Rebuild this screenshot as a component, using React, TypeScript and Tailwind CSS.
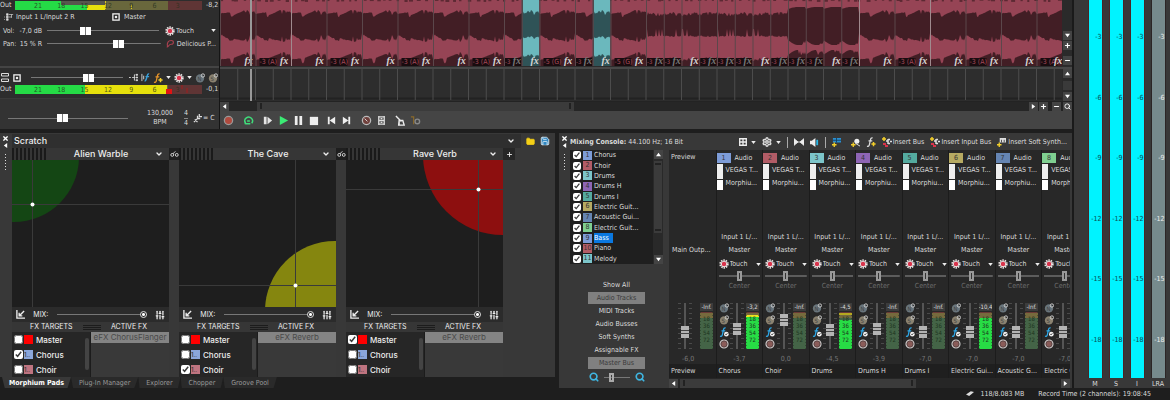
import React from 'react';
import { ChevronDown, Folder, Save, Settings, SlidersVertical, Search, Plus, Minus } from 'lucide-react';

type Track = {
  id: number;
  name: string;
  short: string;
  color: string;
  fader: number;
  gain: string;
  peak: string;
  level: number;
};

const TRACKS: Track[] = [
  { id: 1, name: 'Chorus', short: 'Chorus', color: '#7d9cd8', fader: 42, gain: '-3,7', peak: '-3,2', level: 34 },
  { id: 2, name: 'Choir', short: 'Choir', color: '#b25c66', fader: 68, gain: '0,0', peak: '-Inf.', level: 0 },
  { id: 3, name: 'Drums', short: 'Drums', color: '#7cc5ca', fader: 38, gain: '-4,5', peak: '-4,5', level: 29 },
  { id: 4, name: 'Drums H', short: 'Drums H', color: '#8e65b5', fader: 42, gain: '-3,9', peak: '-Inf.', level: 0 },
  { id: 5, name: 'Drums I', short: 'Drums I', color: '#54aa9f', fader: 31, gain: '-7,0', peak: '-Inf.', level: 0 },
  { id: 6, name: 'Electric Guit...', short: 'Electric Gui...', color: '#b6aa62', fader: 31, gain: '-7,0', peak: '-10,4', level: 31 },
  { id: 7, name: 'Acoustic Gui...', short: 'Acoustic G...', color: '#6585b3', fader: 31, gain: '-7,0', peak: '-Inf.', level: 0 },
  { id: 8, name: 'Electric Guit...', short: 'Electric Guit', color: '#7fcf90', fader: 31, gain: '-7,0', peak: '-Inf.', level: 0 },
  { id: 9, name: 'Bass', short: 'Bass', color: '#7d9cd8', fader: 31, gain: '-7,0', peak: '-Inf.', level: 0 },
  { id: 10, name: 'Piano', short: 'Piano', color: '#b25c66', fader: 31, gain: '-7,0', peak: '-Inf.', level: 0 },
  { id: 11, name: 'Melody', short: 'Melody', color: '#7cc5ca', fader: 31, gain: '-7,0', peak: '-Inf.', level: 0 },
];

const H_SLIDER =
  'h-2 min-w-0 appearance-none bg-[linear-gradient(#777,#777)] bg-[length:100%_1px] bg-center bg-no-repeat [&::-webkit-slider-thumb]:h-2 [&::-webkit-slider-thumb]:w-[11px] [&::-webkit-slider-thumb]:appearance-none [&::-webkit-slider-thumb]:bg-[linear-gradient(90deg,#fff_5px,#777_5px,#777_6px,#fff_6px)]';

const Caret = () => (
  <svg viewBox="0 0 6 4" className="h-[3px] w-[5px] shrink-0">
    <path d="M0 0h6L3 4z" fill="#eee" />
  </svg>
);

/* Automation gear with the red centre */
const Gear = () => (
  <svg viewBox="0 0 12 12" className="size-[10px] shrink-0">
    <circle cx="6" cy="6" r="4.6" fill="none" stroke="#f0e8e8" strokeWidth="2" strokeDasharray="1.8 1.1" />
    <circle cx="6" cy="6" r="3.7" fill="#f0e8e8" />
    <circle cx="6" cy="6" r="2.7" fill="#d8344c" />
  </svg>
);

const Arm = () => (
  <svg viewBox="0 0 12 12" className="size-[10px]">
    <circle cx="6" cy="6" r="4.8" fill="#8b5c59" stroke="#ccc" strokeWidth="1.4" />
    <circle cx="6" cy="6" r="3.6" fill="none" stroke="#4c4040" strokeWidth=".8" />
  </svg>
);

const Disc = ({ letter, color }: { letter: string; color: string }) => (
  <svg viewBox="0 0 12 12" className="size-[10px] shrink-0">
    <circle cx="6" cy="6.5" r="5" fill={color} />
    <text x="3" y="9" fontSize="7" fill="#444">{letter}</text>
    <circle cx="9.5" cy="3" r="2" fill="none" stroke="#c8c8c8" strokeWidth="1.2" />
  </svg>
);

const Fx = ({ color, plus }: { color: string; plus?: boolean }) => (
  <svg viewBox="0 0 12 12" className="size-[10px] shrink-0">
    <path d="M8 1.2C6.4.6 5.7 1.8 5.3 3.5L4 9.5C3.7 11 2.6 11.4 1.2 11M3 4.5h4.5" fill="none" stroke={color} strokeWidth="1.5" />
    {plus ? (
      <path d="M9 6v5M6.5 8.5h5" stroke="#f3cf2a" strokeWidth="1.8" />
    ) : (
      <>
        <circle cx="8.8" cy="8.6" r="2.8" fill="#eee" />
        <path d="M7.5 8.5l1 1 1.6-2" fill="none" stroke="#222" strokeWidth=".9" />
      </>
    )}
  </svg>
);

const Routing = () => (
  <svg viewBox="0 0 12 12" className="size-[10px] shrink-0">
    <path d="M3 2h2v2H3zM3 5h2v2H3zM3 8h2v2H3zM0 6h1M0 9h1M6 3h5M6 6h3M9 3v4" fill="#ddd" stroke="#ddd" strokeWidth=".8" />
  </svg>
);

const OutBox = () => (
  <svg viewBox="0 0 9 9" className="size-2 shrink-0">
    <rect x="1" y="1" width="7" height="7" fill="#222" stroke="#eee" strokeWidth="1.5" />
    <rect x="3.2" y="3.2" width="2.6" height="2.6" fill="#eee" />
  </svg>
);

const TouchSelect = ({ label, small }: { label: string; small?: boolean }) => (
  <label className="flex items-center gap-px">
    <Gear />
    <select aria-label={label} className={small ? 'w-[25px] appearance-none outline-none' : 'w-[34px] appearance-none outline-none'}>
      <option>Touch</option>
    </select>
    <Caret />
  </label>
);

/* ---------------- track headers ---------------- */

const SCALE = [21, 18, 15, 12, 9, 6, 3];

const OutMeter = ({ peak, hot }: { peak: string; hot?: boolean }) => (
  <div className="flex items-center">
    <span className="w-[15px]">Out</span>
    <svg viewBox="0 0 187 9" className="h-[9px] w-[187px]">
      <rect width="187" height="9" fill="#5f3535" />
      <rect width="153" height="9" fill="#69673c" />
      {hot ? (
        <>
          <rect width="70" height="9" fill="#25db46" />
          <rect x="70" width="82" height="9" fill="#e6e00c" />
          <path d="M151 4h6v5h-6z" fill="#e01414" />
          <path d="M167 0v4M172 3v5" stroke="#a31c1c" />
        </>
      ) : (
        <>
          <rect width="72" height="9" fill="#25db46" />
          <rect x="72" width="18" height="9" fill="#e6e00c" />
          <rect x="46" width="44" height="4" fill="#57564d" />
          <path d="M90.5 0v8M116.5 4v4" stroke="#d8c81c" />
        </>
      )}
      {SCALE.map((n, i) => (
        <text key={n} x={23 + i * 23.3} y="7" fontSize="7" textAnchor="middle" fill="#26301c" fillOpacity=".8">{n}</text>
      ))}
    </svg>
    <span className="pl-1">{peak}</span>
  </div>
);

const TrackHeaders = () => (
  <section className="flex w-[219px] shrink-0 flex-col bg-[#2d2d2d]">
    <div className="flex h-[66px] flex-col">
      <OutMeter peak="-8,2" />
      <div className="flex h-[14px] items-center gap-[2px] px-1">
        <Routing />
        <button className="w-[94px] text-left whitespace-nowrap">Input 1 L/Input 2 R</button>
        <OutBox />
        <button className="pl-[2px]">Master</button>
      </div>
      <div className="flex h-[13px] items-center px-[3px]">
        <label htmlFor="vol" className="w-[17px]">Vol:</label>
        <span className="w-7">-7,0 dB</span>
        <input id="vol" type="range" defaultValue={33} className={`${H_SLIDER} w-[115px]`} />
        <span className="ml-[6px]"><TouchSelect label="Automation" /></span>
      </div>
      <div className="flex h-[13px] items-center px-[3px]">
        <label htmlFor="pan" className="w-[17px]">Pan:</label>
        <span className="w-7">15 % R</span>
        <input id="pan" type="range" defaultValue={64} className={`${H_SLIDER} w-[115px]`} />
        <svg viewBox="0 0 12 12" className="ml-[5px] size-[9px]">
          <path d="M2 10C1 5 3 2 7 2s4 5 0 5-2 3-6 4" fill="none" stroke="#a8404f" strokeWidth="1.5" />
        </svg>
        <span className="pl-[2px] whitespace-nowrap">Delicious P...</span>
      </div>
    </div>
    <div className="flex h-8 flex-col gap-px border-t-2 border-[#444] pt-1">
      <div className="flex h-[11px] items-center gap-1 pl-px">
        <svg viewBox="0 0 8 9" className="h-[9px] w-2">
          <path d="M.5.5h7v2.5h-7zM.5 6h7v2.5h-7z" fill="none" stroke="#ddd" />
        </svg>
        <OutBox />
        <input type="range" aria-label="Master volume" defaultValue={64} className={`${H_SLIDER} ml-[6px] w-[92px]`} />
        <div className="flex flex-1 items-center justify-end gap-[3px] pr-px">
          <svg viewBox="0 0 10 10" className="size-[9px]"><path d="M0 5h2M3.500 5h2M6 2v6M6 2h1M6 8h1M6 5h1M8 1.500h1.500v1H8zM8 4.500h1.500v1H8zM8 7.500h1.500v1H8z" stroke="#ddd" fill="#ddd" /></svg>
          <svg viewBox="0 0 10 10" className="size-[9px]"><path d="M1 1v8M3 3v4" stroke="#ddd" /><path d="M9 1C6 0 7 9 4 9M5 4h4" stroke="#3a9fd8" fill="none" strokeWidth="1.5" /></svg>
          <Fx color="#e8952a" plus />
          <Caret />
          <Gear />
          <Caret />
          <Disc letter="N" color="#69757c" />
          <Disc letter="S" color="#8a8270" />
        </div>
      </div>
      <OutMeter peak="-0,1" hot />
    </div>
    <div className="flex flex-1 items-center gap-5 border-t border-[#3a3a3a] bg-[#333] pt-2 pl-2">
      <input type="range" aria-label="Playback rate" defaultValue={45} className={`${H_SLIDER} w-[120px]`} />
      <div className="flex w-6 flex-col items-center leading-[9px]"><span>130,000</span><span>BPM</span></div>
      <div className="flex -ml-2 items-center gap-[5px]">
        <div className="flex flex-col leading-[9px]"><span className="border-b border-[#888]">4</span><span>4</span></div>
        <span className="flex items-center gap-px whitespace-nowrap">
          <svg viewBox="0 0 10 10" className="size-[9px]"><path d="M1 9l5-5M5 2v3h3M7 0v3h3M2 6l3 3" stroke="#ddd" strokeWidth="1.4" fill="none" /></svg>
          = C
        </span>
      </div>
    </div>
  </section>
);

/* ---------------- timeline ---------------- */

const BEAT = 17.75;
// clip starts in beats
const CLIPS = [0, 2, 4, 6, 8, 10, 12, 14, 16, 17, 18, 20, 21, 22, 24, 25, 26, 27, 28, 29, 30, 31, 32, 33, 34, 35, 36, 38, 40, 42, 44, 46];
const CYAN = [17, 21];

const noise = (i: number) => {
  const v = Math.sin(i * 12.9898) * 43758.5453;
  return v - Math.floor(v);
};

// lower edge of the left channel, then both edges of the right channel
const edges = (x: number) => {
  const beat = x / BEAT;
  const n = noise(x % 71);
  if (CYAN.includes(Math.floor(beat))) return [10 + n * 5, 36 + n * 3, 54 + n * 4];
  if (beat >= 24 && beat < 32) return [12 + n * 4, 37 - (n > 0.9 ? 8 : n * 2), 57 + n * 4];
  if (beat >= 32 && beat < 36) {
    const p = beat % 1;
    const bulge = Math.sin(Math.min(p * 1.8, 1) * Math.PI * 0.5);
    return [9 - bulge * 2, 40 + bulge * 5 - (p > 0.8 ? n * 4 : 0), 55 - bulge * 5 + (p > 0.6 ? n * 5 : 0)];
  }
  const p = (x % (BEAT * 2)) / (BEAT * 2);
  if (p < 0.3) return [13 - p * 4 + n, 33 + p * 22 + n * 2, 59 - p * 4 + n];
  if (p < 0.38) return [17 - n, 41 - n, 64 - n * 2];
  if (p < 0.7) return [15 - (p - 0.38) * 16 + n * 0.5, 38 + (p - 0.38) * 8 + n, 58 - (p - 0.38) * 14];
  return [10 + n * 5, 42 - n * 7, 52 + n * 7];
};

const lobe = (from: number, to: number) => {
  const xs: number[] = [];
  for (let x = from; x <= to; x += 1) xs.push(x);
  const upper = xs.map((x) => `L${x} ${edges(x)[0].toFixed(1)}`).join('');
  const top = xs.map((x) => `L${x} ${edges(x)[1].toFixed(1)}`).join('');
  const low = [...xs].reverse().map((x) => `L${x} ${edges(x)[2].toFixed(1)}`).join('');
  return `M${from} 0${upper}L${to} 0z M${from} 46${top}${low}z`;
};

const label = (beat: number) => {
  if (beat < 16 || beat >= 36) return beat % 4 === 2 ? '-3 (A)' : '';
  if (CYAN.includes(beat) || beat === 26 || beat === 30 || beat === 34) return '';
  if (beat === 18 || beat === 22) return '-5 (G)';
  return '-3';
};

const Waveform = () => (
  <svg viewBox="0 0 842 66" preserveAspectRatio="xMinYMin slice" className="h-[66px] min-w-0 flex-1 bg-[#421e25]">
    <path d={lobe(0, 842)} fill="#964455" />
    {Array.from({ length: 120 }, (_, i) => (
      <rect key={i} x={i * 7 + noise(i) * 5} width={2 + noise(i + 9) * 2} height={0.6 + noise(i + 4) * 1.4} fill="#5c2933" />
    ))}
    {CYAN.map((b) => (
      <g key={b}>
        <rect x={b * BEAT} width={BEAT} height="66" fill="#2f5357" />
        <path d={lobe(Math.round(b * BEAT) + 1, Math.round((b + 1) * BEAT) - 1)} fill="#6bb8bd" />
      </g>
    ))}
    {CLIPS.map((b, i) => {
      const end = (CLIPS[i + 1] ?? 47.6) * BEAT;
      const text = label(b);
      const narrow = end - b * BEAT < 20;
      return (
        <g key={b} fontSize="7">
          <path d={`M${b * BEAT + 0.5} 0V66`} stroke={b === 4 || b === 36 || b === 40 ? '#a08a8e' : '#5b474b'} />
          {text && <rect x={b * BEAT + (narrow ? 1 : 4)} y="58" width={narrow ? 16 : 17} height="8" fill="#190c0f" />}
          {text && <text x={b * BEAT + (narrow ? 1 : 4)} y="64" fontSize={narrow ? 6 : 7} fill="#a84a5a">{text}</text>}
          <text x={end - (narrow ? 9 : 11)} y="64" fontSize="10" fontStyle="italic" fontWeight="bold" fontFamily="Liberation Serif, serif" fill={narrow && text ? '#777' : '#d8d8d8'}>fx</text>
        </g>
      );
    })}
    <path d="M31 0V66" stroke="#999" strokeWidth="2" />
  </svg>
);

const TinyButton = ({ name, children }: { name: string; children: React.ReactNode }) => (
  <button aria-label={name} className="flex size-[9px] shrink-0 items-center justify-center bg-[#444] text-white">{children}</button>
);

const Tri = ({ d }: { d: string }) => (
  <svg viewBox="0 0 6 6" className="size-[5px]"><path d={d} fill="#fff" /></svg>
);
const UP = 'M0 5h6L3 1z';
const DOWN = 'M0 1h6L3 5z';
const LEFT = 'M5 0v6L1 3z';
const RIGHT = 'M1 0v6L5 3z';

const TRANSPORT = [
  { name: 'Record', gap: 'w-5', el: <circle cx="6" cy="6" r="4.500" fill="#b04a3e" stroke="#999" strokeWidth="1.400" /> },
  { name: 'Loop', gap: 'w-[19px]', el: <path d="M2.500 8.500a4.200 4.200 0 1 1 7 .5M2.500 10V7M2.500 9.500H8M4.500 6.500h3" fill="none" stroke="#3fdc7a" strokeWidth="1.600" /> },
  { name: 'Play from start', gap: 'w-4', el: <path d="M2 2h3v8H2zM6 2l5 4-5 4z" fill="#e4e4e4" /> },
  { name: 'Play', gap: 'w-[15px]', el: <path d="M2 1l9 5-9 5z" fill="#3bea74" /> },
  { name: 'Pause', gap: 'w-[15px]', el: <path d="M2 1h3v10H2zM7 1h3v10H7z" fill="#eee" /> },
  { name: 'Stop', gap: 'w-[18px]', el: <path d="M2 2h9v9H2z" fill="#eee" /> },
  { name: 'Go to start', gap: 'w-[15px]', el: <path d="M2 2h2v8H2zM10 2v8L4 6z" fill="#eee" /> },
  { name: 'Go to end', gap: 'w-5', el: <path d="M8 2h2v8H8zM2 2v8l6-4z" fill="#eee" /> },
  { name: 'Capture', gap: 'w-[15px]', el: <><circle cx="6" cy="6" r="4.500" fill="#70403c" stroke="#bbb" strokeWidth="1.400" /><path d="M4 4l3 3" stroke="#ddd" /></> },
  { name: 'Step', gap: 'w-[19px]', el: <path d="M3 1v10M9 1v10M3 2h6M3 6h6M3 10h6M5 4h2M5 8h2" fill="none" stroke="#ddd" strokeWidth="1.400" /> },
  { name: 'Metronome', gap: 'w-[15px]', el: <path d="M4.500 6h4l1.500 5H4zM1 1l6 6M4.500 6v5" fill="none" stroke="#eee" strokeWidth="1.500" /> },
  { name: 'Count in', gap: 'w-[17px]', el: <><path d="M1 2h3v8" stroke="#8b6a2a" fill="none" strokeWidth="1.300" /><circle cx="8" cy="7" r="2.500" fill="none" stroke="#888" strokeWidth="1.500" /></> },
];

const Timeline = () => (
  <section className="flex min-w-0 flex-1 flex-col border-l border-[#151515] bg-[#232323]">
    <div className="flex">
      <Waveform />
      <div className="flex w-[10px] flex-col items-center justify-end gap-px bg-[#2a2a2a] pb-px">
        <TinyButton name="Scroll down"><Tri d={DOWN} /></TinyButton>
        <TinyButton name="Zoom in height"><Plus size={7} strokeWidth={4} /></TinyButton>
        <span className="h-1" />
        <TinyButton name="Zoom out height"><Minus size={7} strokeWidth={4} /></TinyButton>
      </div>
    </div>
    <div className="h-[3px] border-t border-[#2c2c2c] bg-[#484848]" />
    <div className="flex h-8">
      <svg viewBox="0 0 842 32" preserveAspectRatio="xMinYMin slice" className="h-8 min-w-0 flex-1 bg-[#2d2d2d]">
        <path d="M0 29.500H842" stroke="#222" strokeWidth="2" />
        {Array.from({ length: 47 }, (_, i) => (
          <path key={i} d={`M${(i + 1) * BEAT} 0V31`} stroke="#4c4c4c" />
        ))}
        <path d="M31 0V32" stroke="#999" strokeWidth="2" />
      </svg>
      <div className="flex w-[10px] flex-col items-center justify-between bg-[#2a2a2a]">
        <TinyButton name="Scroll bus up"><Tri d={UP} /></TinyButton>
        <span className="h-[9px] w-[9px] bg-[#3a3a3a]" />
        <TinyButton name="Scroll bus down"><Tri d={DOWN} /></TinyButton>
      </div>
    </div>
    <div className="flex h-[10px] items-center">
      <TinyButton name="Scroll left"><Tri d={LEFT} /></TinyButton>
      <div className="h-[9px] min-w-0 flex-1 bg-[#262626] pl-7">
        <div className="flex h-full w-[41%] items-center justify-between bg-[#3b3b3b] px-[3px]">
          <span className="h-[6px] w-[2px] bg-[#222]" /><span className="h-[6px] w-[2px] bg-[#222]" />
        </div>
      </div>
      <TinyButton name="Scroll right"><Tri d={RIGHT} /></TinyButton>
      <span className="w-px" />
      <TinyButton name="Zoom in time"><Plus size={7} strokeWidth={4} /></TinyButton>
      <span className="w-1" />
      <TinyButton name="Zoom out time"><Minus size={7} strokeWidth={4} /></TinyButton>
      <span className="w-[2px]" />
      <TinyButton name="Zoom tool"><Search size={7} strokeWidth={3} /></TinyButton>
    </div>
    <div className="flex flex-1 items-center bg-[#454545] pl-[3px]">
      {TRANSPORT.map((t) => (
        <span key={t.name} className={`${t.gap} flex shrink-0`}>
          <button aria-label={t.name}><svg viewBox="0 0 12 12" className="size-[11px]">{t.el}</svg></button>
        </span>
      ))}
    </div>
  </section>
);

/* ---------------- docked panels ---------------- */

const DockStrip = () => (
  <div className="flex w-[10px] shrink-0 flex-col items-center gap-[2px] pt-[2px]">
    <button aria-label="Close panel"><svg viewBox="0 0 6 6" className="size-[5px]"><path d="M.5.5l5 5M5.500.5l-5 5" stroke="#fff" strokeWidth="1.600" /></svg></button>
    <button aria-label="Collapse panel"><Tri d={LEFT} /></button>
    <span className="mt-1 h-[18px] w-px bg-[repeating-linear-gradient(#ddd_0_1px,transparent_1px_3px)]" />
  </div>
);

type Pad = {
  title: string;
  fill: string;
  cx: number;
  cy: number;
  r: number;
  x: number;
  y: number;
  fx: string;
  checked: string;
};

const PADS: Pad[] = [
  { title: 'Alien Warble', fill: '#144614', cx: 2, cy: -3, r: 65, x: 20, y: 44, fx: 'eFX ChorusFlanger', checked: 'Chorus' },
  { title: 'The Cave', fill: '#85860f', cx: 156, cy: 151, r: 70, x: 116, y: 125, fx: 'eFX Reverb', checked: 'Choir' },
  { title: 'Rave Verb', fill: '#8d0f0f', cx: 157, cy: -5, r: 80, x: 132, y: 29, fx: 'eFX Reverb', checked: 'Master' },
];

const TARGETS = [
  { name: 'Master', color: '#ff0000', mark: '' },
  { name: 'Chorus', color: '#8ba6da', mark: '1..' },
  { name: 'Choir', color: '#bf7480', mark: '1..' },
];

const FxPad = ({ pad }: { pad: Pad }) => (
  <article className="w-[157px] shrink-0">
    <label className="flex h-3 items-center bg-[#363636] pr-[6px]">
      <span className="h-3 w-[35px] shrink-0 bg-[repeating-linear-gradient(90deg,#1a1a1a_0_2px,#363636_2px_4px)]" />
      <select aria-label="Pad preset" className="min-w-0 flex-1 appearance-none text-[9px] leading-3 font-medium outline-none [text-align-last:center]">
        <option>{pad.title}</option>
      </select>
      <ChevronDown size={8} strokeWidth={4} />
    </label>
    <svg viewBox="0 0 157 147" className="block h-[147px] w-full bg-[#1e1e1e]">
      <circle cx={pad.cx} cy={pad.cy} r={pad.r} fill={pad.fill} />
      <path d={`M0 ${pad.y + 0.5}H157M${pad.x + 0.5} 0V147`} stroke="#3a3a3a" />
      <circle cx={pad.x + 0.5} cy={pad.y + 0.5} r="2" fill="#fff" />
    </svg>
    <div className="flex h-[15px] items-center justify-between bg-[#2b2b2b] px-1">
      <svg viewBox="0 0 10 10" className="size-[9px]"><path d="M1 0v9h9M9 1L4 6M3.500 3v3.500H7" fill="none" stroke="#eee" strokeWidth="1.500" /></svg>
      <label htmlFor={`mix-${pad.title}`}>MIX:</label>
      <input
        id={`mix-${pad.title}`}
        type="range"
        defaultValue={100}
        className="h-2 w-[90px] appearance-none bg-[linear-gradient(#777,#777)] bg-[length:100%_1px] bg-center bg-no-repeat [&::-webkit-slider-thumb]:size-[7px] [&::-webkit-slider-thumb]:appearance-none [&::-webkit-slider-thumb]:rounded-full [&::-webkit-slider-thumb]:border [&::-webkit-slider-thumb]:border-[#ddd] [&::-webkit-slider-thumb]:bg-[radial-gradient(#fff_1px,#2b2b2b_2px)]"
      />
      <button aria-label="Pad settings"><SlidersVertical size={10} strokeWidth={3} /></button>
    </div>
    <div className="flex h-[10px] items-center justify-between bg-[#363636] pr-[22px] pl-[18px]">
      <span>FX TARGETS</span>
      <span className="h-[5px] w-[18px] bg-[repeating-linear-gradient(#1c1c1c_0_1px,#363636_1px_2px)]" />
      <span>ACTIVE FX</span>
    </div>
    <div className="flex h-[45px]">
      <div className="flex w-[79px] justify-between border-r border-[#1c1c1c] bg-[#262626] pr-px pl-[2px]">
        <div className="flex flex-col">
          {TARGETS.map((t) => (
            <label key={t.name} className="flex h-[15px] items-center gap-px text-[8px] font-medium">
              <input type="checkbox" defaultChecked={pad.checked === t.name} className="size-[9px] accent-white" />
              <span className="flex h-[9px] w-[9px] items-center text-[6px] text-[#333]" style={{ background: t.color }}>{t.mark}</span>
              <span className="pl-[2px]">{t.name}</span>
            </label>
          ))}
        </div>
        <span className="mt-[6px] h-8 w-1 rounded-sm bg-[#444]" />
      </div>
      <div className="min-w-0 flex-1 bg-[#393939]">
        <button className="block h-[11px] w-full bg-[#848484] text-[8px] leading-[11px] whitespace-nowrap text-[#4a4a4a]">{pad.fx}</button>
      </div>
    </div>
  </article>
);

const ChainLink = () => (
  <div className="w-[10px] shrink-0">
    <button aria-label="Link pads" className="flex h-3 w-full items-center justify-center bg-[#1f1f1f]">
      <svg viewBox="0 0 10 6" className="h-[6px] w-[9px]"><circle cx="2.500" cy="4" r="1.600" fill="none" stroke="#ddd" /><circle cx="7.500" cy="4" r="1.600" fill="none" stroke="#ddd" /><path d="M3 3L6 0" stroke="#ddd" /></svg>
    </button>
  </div>
);

const TABS = ['Morphium Pads', 'Plug-In Manager', 'Explorer', 'Chopper', 'Groove Pool'];

const MorphiumPads = () => (
  <section className="flex w-[555px] shrink-0 flex-col">
    <div className="flex flex-1 bg-[#383838] pt-px font-[Inter,sans-serif] text-[#eee]">
      <DockStrip />
      <div className="flex min-w-0 flex-1 flex-col pl-[2px]">
        <div className="flex h-[14px] items-center gap-[5px]">
          <label className="flex h-full w-[509px] items-center bg-[#2f2f2f] pr-[6px] pl-[2px]">
            <select aria-label="Scene" className="flex-1 appearance-none text-[9px] leading-3 font-medium outline-none"><option>Scratch</option></select>
            <ChevronDown size={8} strokeWidth={4} />
          </label>
          <button aria-label="Open"><Folder size={9} fill="#f4cf16" stroke="#f4cf16" /></button>
          <button aria-label="Save"><Save size={10} fill="#2f86c0" stroke="#e6f2fa" strokeWidth={2} /></button>
        </div>
        <div className="flex flex-1">
          <FxPad pad={PADS[0]} />
          <ChainLink />
          <FxPad pad={PADS[1]} />
          <ChainLink />
          <FxPad pad={PADS[2]} />
          <button aria-label="Add pad" className="flex h-3 w-3 items-center justify-center bg-[#262626]"><Plus size={7} strokeWidth={3} /></button>
        </div>
      </div>
    </div>
    <nav className="flex h-[11px] pl-[2px]">
      {TABS.map((tab, i) => (
        <button
          key={tab}
          className={
            i === 0
              ? 'bg-[#383838] px-[7px] font-bold text-white [clip-path:polygon(0_0,100%_0,95%_100%,4%_100%)]'
              : 'bg-[#2a2a2a] px-2 text-[#999] [clip-path:polygon(0_0,100%_0,94%_100%,3%_100%)]'
          }
        >
          {tab}
        </button>
      ))}
    </nav>
  </section>
);

/* ---------------- mixing console ---------------- */

const StripMeter = ({ peak, level }: { peak: string; level: number }) => (
  <svg viewBox="0 0 13 46" className="h-[46px] w-[13px] shrink-0">
    <rect width="13" height="8" fill="#3c3c3c" />
    <text x="6.500" y="6" fontSize="6" textAnchor="middle" fill="#ddd">{peak}</text>
    <rect y="9" width="13" height="37" fill="#446447" />
    <rect y="9" width="13" height="6" fill="#766a3d" />
    {level > 0 && <rect y={46 - level} width="13" height={level} fill="#27dc45" />}
    {level > 33 && <rect y="12" width="13" height="2" fill="#eee31d" />}
    {level > 0 && level < 30 && <rect y="10" width="13" height="2" fill="#b5a91f" />}
    <path d="M0 9.500H13" stroke="#6b3a36" />
    {[18, 36, 54, 72].map((n, i) => (
      <text key={n} x="6.500" y={18 + i * 7} fontSize="6" textAnchor="middle" fill="#1d3420">{n}</text>
    ))}
    <path d="M.5 9V46M12.500 9V46" stroke="#1d3420" strokeOpacity=".5" strokeDasharray="1 2" />
  </svg>
);

const Fader = ({ name, value }: { name: string; value: number }) => (
  <div className="flex shrink-0">
    <span className="h-[46px] w-[3px] bg-[repeating-linear-gradient(#4a4a4a_0_1px,transparent_1px_5px)]" />
    <input
      type="range"
      aria-label={`${name} fader`}
      defaultValue={value}
      className="h-[46px] w-2 appearance-none bg-[linear-gradient(90deg,transparent_3px,#555_3px,#555_5px,transparent_5px)] [direction:rtl] [writing-mode:vertical-lr] [&::-webkit-slider-thumb]:h-3 [&::-webkit-slider-thumb]:w-2 [&::-webkit-slider-thumb]:appearance-none [&::-webkit-slider-thumb]:bg-[linear-gradient(#b4b4b4_4px,#444_4px,#444_5px,#b4b4b4_5px,#b4b4b4_7px,#444_7px,#444_8px,#b4b4b4_8px)]"
    />
    <span className="h-[46px] w-[3px] bg-[repeating-linear-gradient(#4a4a4a_0_1px,transparent_1px_5px)]" />
  </div>
);

const Strip = ({ track }: { track: Track }) => (
  <article className="flex min-w-0 flex-col border-l border-[#1c1c1c] bg-[#282828]">
    <div className="flex h-[14px] items-center gap-1 pt-px">
      <span className="w-[14px] text-center text-[#333]" style={{ background: track.color }}>{track.id}</span>
      Audio
    </div>
    <div className="flex h-[67px] gap-[3px] leading-[13px]">
      <div className="flex h-[26px] w-[6px] flex-col gap-px"><span className="h-[15px] bg-[#eee]" /><span className="flex-1 bg-white" /></div>
      <div className="flex flex-col whitespace-nowrap">
        <button className="h-[13px] text-left">VEGAS T...</button>
        <button className="h-[13px] text-left">Morphiu...</button>
      </div>
    </div>
    <div className="flex flex-col px-[2px] leading-[13px]">
      <button className="h-[13px] whitespace-nowrap">Input 1 L/...</button>
      <button className="h-[13px]">Master</button>
      <div className="flex h-[14px] items-center"><TouchSelect label={`${track.name} automation`} small /></div>
      <input
        type="range"
        aria-label={`${track.name} pan`}
        className="h-[10px] w-full min-w-0 appearance-none bg-[linear-gradient(#5c5c5c,#5c5c5c)] bg-[length:100%_2px] bg-center bg-no-repeat [&::-webkit-slider-thumb]:h-[10px] [&::-webkit-slider-thumb]:w-[5px] [&::-webkit-slider-thumb]:appearance-none [&::-webkit-slider-thumb]:border-2 [&::-webkit-slider-thumb]:border-[#999] [&::-webkit-slider-thumb]:bg-[#333]"
      />
      <span className="h-[10px] text-center leading-[10px] text-[#6c6c6c]">Center</span>
    </div>
    <div className="mt-3 flex justify-between pr-[3px] pl-[2px]">
      <div className="flex flex-col justify-between">
        <Disc letter="N" color="#69757c" />
        <Disc letter="S" color="#8a8270" />
        <Fx color="#2ea8e8" />
        <Arm />
      </div>
      <Fader name={track.name} value={track.fader} />
      <StripMeter peak={track.peak} level={track.level} />
    </div>
    <span className="h-[15px] text-center leading-5 text-[#777]">{track.gain}</span>
    <span className="flex flex-1 items-center bg-[#1f1f1f] pl-[2px] whitespace-nowrap">{track.short}</span>
  </article>
);

const FILTERS = ['Show All', 'Audio Tracks', 'MIDI Tracks', 'Audio Busses', 'Soft Synths', 'Assignable FX', 'Master Bus'];

const BusIcon = () => (
  <svg viewBox="0 0 10 10" className="size-[10px]">
    <path d="M0 2h4M2 0v4" stroke="#f3cf2a" strokeWidth="1.500" />
    <path d="M1 7h3M3 9h3" stroke="#d8344c" strokeWidth="2" />
    <path d="M4 4h2M6 2v5M6 2.500h2M6 6.500h2M8 4.500h2" stroke="#ddd" strokeWidth="1.500" fill="none" />
  </svg>
);

const ConsoleToolbar = () => (
  <header className="flex h-[16px] items-center justify-between pr-[5px] whitespace-nowrap">
    <h2><b>Mixing Console:</b> 44.100 Hz; 16 Bit</h2>
    <div className="flex items-center gap-[6px]">
      <button aria-label="Layout" className="flex items-center gap-1">
        <svg viewBox="0 0 9 9" className="size-2"><path d="M.8.8h7.400v7.400H.8zM4.500 0v9M0 4.500h9" fill="none" stroke="#eee" strokeWidth="1.500" /></svg>
        <Caret />
      </button>
      <button aria-label="Console settings" className="flex items-center gap-1"><Settings size={10} strokeWidth={3.5} /><Caret /></button>
      <span className="h-[11px] w-px bg-[#aaa]" />
      <button aria-label="Downmix"><svg viewBox="0 0 12 8" className="h-2 w-[10px]"><path d="M0 0v8l5-4zM12 0v8L7 4zM5 4h2" fill="#eee" stroke="#eee" /></svg></button>
      <button aria-label="Dim"><svg viewBox="0 0 10 10" className="size-[9px]"><path d="M0 3h2l4-3v10L2 7H0z" fill="#eee" /><path d="M8 2v6" stroke="#26b7e8" strokeWidth="2" /></svg></button>
      <span className="h-[11px] w-px bg-[#aaa]" />
      <button aria-label="Insert audio track"><svg viewBox="0 0 10 10" className="size-[9px]"><path d="M1 0h9v5H1z" fill="#2b8fd0" /><path d="M1 2.500h9M5 0v5" stroke="#14405f" /><path d="M0 7.500h5M2.500 5v5" stroke="#f3cf2a" strokeWidth="1.500" /></svg></button>
      <button aria-label="Insert assignable" className="pl-1"><svg viewBox="0 0 10 10" className="size-[9px]"><circle cx="6.500" cy="3.500" r="2.800" fill="#eee" /><path d="M5 6l5 3" stroke="#eee" /><path d="M0 7.500h5M2.500 5v5" stroke="#f3cf2a" strokeWidth="1.500" /></svg></button>
      <button aria-label="Insert FX"><Fx color="#ddd" plus /></button>
      <button className="flex items-center gap-px"><BusIcon />Insert Bus</button>
      <button className="flex items-center gap-px"><BusIcon />Insert Input Bus</button>
      <button className="flex items-center gap-[2px]">
        <svg viewBox="0 0 10 10" className="size-[9px]"><path d="M3 0h7v5H3z" fill="#ddd" /><path d="M5 2v3M8 2v3" stroke="#444" /><path d="M0 7.500h5M2.500 5v5" stroke="#f3cf2a" strokeWidth="1.500" /></svg>
        Insert Soft Synth...
      </button>
    </div>
  </header>
);

const MixingConsole = () => (
  <section className="flex min-w-0 flex-1 bg-[#383838] pt-px">
    <DockStrip />
    <div className="flex min-w-0 flex-1 flex-col pl-px">
      <ConsoleToolbar />
      <div className="flex min-h-0 flex-1">
        <div className="flex w-[99px] shrink-0 flex-col">
          <div className="flex h-[114px] w-[93px] bg-[#1f1f1f]">
            <div className="flex flex-1 flex-col pl-[3px]">
              {TRACKS.map((t) => (
                <label key={t.id} className="flex flex-1 items-center gap-[2px] leading-[10px] whitespace-nowrap">
                  <input type="checkbox" defaultChecked className="size-2 accent-white" />
                  <span className="w-[9px] text-center leading-[9px] text-[#333]" style={{ background: t.color }}>{t.id}</span>
                  <span className={t.name === 'Bass' ? 'bg-[#0a78e0] pr-1 text-white' : ''}>{t.name}</span>
                </label>
              ))}
            </div>
            <div className="flex w-[10px] flex-col items-center bg-[#292929]">
              <TinyButton name="List up"><Tri d={UP} /></TinyButton>
              <span className="my-[2px] flex h-[72px] w-2 flex-col items-center justify-between bg-[#3b3b3b] py-[2px]">
                <span className="h-[2px] w-[6px] bg-[#222]" /><span className="h-[2px] w-[6px] bg-[#222]" />
              </span>
              <span className="flex-1" />
              <TinyButton name="List down"><Tri d={DOWN} /></TinyButton>
            </div>
          </div>
          <div className="mt-[15px] flex w-[93px] flex-col items-center gap-px">
            {FILTERS.map((f) => (
              <button key={f} className={f === 'Audio Tracks' || f === 'Master Bus' ? 'h-3 w-[57px] bg-[#808080] leading-3 text-[#3a3a3a]' : 'h-3 w-[57px] leading-3'}>{f}</button>
            ))}
          </div>
          <div className="mt-[3px] flex w-[93px] items-center justify-center gap-[5px]">
            <button aria-label="Narrower strips"><Search size={10} stroke="#3fb5e0" strokeWidth={4} /></button>
            <input type="range" aria-label="Strip width" defaultValue={25} className="h-[10px] w-[26px] appearance-none bg-[linear-gradient(#777,#777)] bg-[length:100%_1px] bg-center bg-no-repeat [&::-webkit-slider-thumb]:h-[9px] [&::-webkit-slider-thumb]:w-[5px] [&::-webkit-slider-thumb]:appearance-none [&::-webkit-slider-thumb]:border-2 [&::-webkit-slider-thumb]:border-[#aaa]" />
            <button aria-label="Wider strips"><Search size={10} stroke="#3fb5e0" strokeWidth={4} /></button>
          </div>
        </div>
        <div className="flex min-w-0 flex-1 flex-col overflow-hidden pr-[2px]">
          <div className="grid h-[228px] auto-cols-[11.6%] grid-flow-col overflow-hidden">
            <article className="flex min-w-0 flex-col bg-[#282828] whitespace-nowrap">
              <span className="h-[94px] pt-[2px] pl-[2px]">Preview</span>
              <button className="pl-[3px] text-left leading-[13px]">Main Outp...</button>
              <div className="mt-[46px] flex justify-end gap-2 pr-[3px]">
                <Fader name="Preview" value={31} />
                <StripMeter peak="-Inf." level={0} />
              </div>
              <span className="h-[15px] pl-[13px] leading-5 text-[#777]">-6,0</span>
              <span className="flex flex-1 items-center bg-[#1f1f1f] pl-[2px]">Preview</span>
            </article>
            {TRACKS.slice(0, 8).map((t) => (
              <Strip key={t.id} track={t} />
            ))}
          </div>
          <div className="flex flex-1 items-center bg-[#262626]">
            <TinyButton name="Strips left"><Tri d={LEFT} /></TinyButton>
            <div className="h-[9px] min-w-0 flex-1 pl-[2px]"><div className="flex h-full w-[62%] items-center justify-between bg-[#3b3b3b] px-[3px]"><span className="h-[6px] w-[2px] bg-[#222]" /><span className="h-[6px] w-[2px] bg-[#222]" /></div></div>
            <TinyButton name="Strips right"><Tri d={RIGHT} /></TinyButton>
          </div>
        </div>
      </div>
    </div>
  </section>
);

/* ---------------- loudness meters ---------------- */

const LOUDNESS = ['M', 'S', 'I', 'LRA'];

const LoudnessMeters = () => (
  <aside className="flex w-[98px] shrink-0 justify-between border-l-2 border-[#1a1a1a] bg-[#383838] pr-[4px] pl-[13px]">
    {LOUDNESS.map((name) => (
      <div key={name} className="flex w-4 flex-col items-center">
        <div className={name === 'LRA' ? 'flex w-[15px] flex-1 flex-col border-x border-[#2b2525] bg-[#768a8c] pt-[7px] pb-2 text-[#eee]' : 'flex w-[15px] flex-1 flex-col border-x border-[#4a2626] bg-[#00f3ff] pt-[7px] pb-2 text-[#0a4a50]'}>
          {[-3, -6, -9, -12, -15, -18].map((n) => (
            <span key={n} className="flex flex-1 items-center justify-end">{n}</span>
          ))}
        </div>
        <span className="h-[10px] leading-3">{name}</span>
      </div>
    ))}
  </aside>
);

const App = () => {
  return (
    <main className="flex min-h-screen flex-col overflow-hidden bg-[#1e1e1e] font-['DejaVu_Sans_Condensed','Noto_Sans',sans-serif] text-[7px] leading-[10px] text-[#dcdcdc]">
      <div className="flex flex-1">
        <div className="flex min-w-0 flex-1 flex-col gap-1">
          <div className="flex h-[129px]">
            <TrackHeaders />
            <Timeline />
          </div>
          <div className="flex flex-1 gap-1">
            <MorphiumPads />
            <MixingConsole />
          </div>
        </div>
        <LoudnessMeters />
      </div>
      <footer className="flex h-3 items-center justify-end gap-[14px] pr-[19px]">
        <span className="flex items-center gap-[6px]">
          <svg viewBox="0 0 10 7" className="h-[6px] w-2"><path d="M0 4l6-4 4 1-6 5z" fill="#ddd" /></svg>
          118/8.083 MB
        </span>
        <span>Record Time (2 channels): 19:08:45</span>
      </footer>
    </main>
  );
};

export default App;
